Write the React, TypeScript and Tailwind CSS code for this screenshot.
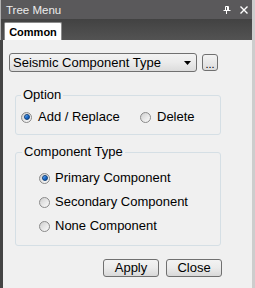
import type { ReactNode } from 'react'

const FONT = { fontFamily: '"Liberation Sans", Arial, sans-serif' }

function Radio({ checked, children, gap = 'gap-[6px]' }: { checked?: boolean; children: ReactNode; gap?: string }) {
  return (
    <label className={`flex h-[14px] items-center ${gap} text-[13px] leading-[14px] text-black`}>
      <span className="flex h-[11px] w-[11px] shrink-0 items-center justify-center rounded-full border border-[#8a8a8a] bg-gradient-to-br from-[#cfcfcf] via-[#e6e6e6] to-[#fbfbfb]">
        {checked && (
          <span className="h-[6px] w-[6px] rounded-full border border-[#0d3f7a] bg-gradient-to-br from-[#7fc0ff] via-[#1f6fd0] to-[#0c4a9a]" />
        )}
      </span>
      <span>{children}</span>
    </label>
  )
}

function Group({ title, titleGap, children, className }: { title: string; titleGap: string; children: ReactNode; className: string }) {
  return (
    <fieldset className={`ml-[12px] w-[206px] rounded-[3px] border border-[#d5dfe5] ${className}`}>
      <legend className={`${titleGap} px-[2px] text-[13px] leading-[14px] text-black`}>{title}</legend>
      {children}
    </fieldset>
  )
}

function Btn({ label }: { label: string }) {
  return (
    <button className="flex h-[18px] w-[56px] items-center justify-center rounded-[3px] border border-[#707070] bg-gradient-to-b from-[#f3f3f3] via-[#ebebeb] to-[#d8d8d8] text-[13px] leading-[14px] text-black">
      {label}
    </button>
  )
}

export default function App() {
  return (
    <div className="flex h-[288px] w-[255px] flex-col overflow-hidden border-r-[3px] border-r-[#cdcdcd] bg-[#f0f0f0]" style={FONT}>
      {/* title bar */}
      <div className="flex h-[19px] shrink-0 items-center border-l border-l-[#b0b0b0] bg-[#5a595b] pl-[5px] pr-[4px]">
        <span className="text-[11.5px] leading-[12px] text-[#ececec]">Tree Menu</span>
        <div className="ml-auto flex items-center gap-[9px]">
          <svg width="8" height="8" viewBox="0 0 8 8" className="shrink-0">
            <path d="M2.5 0.5h3v4h-3z" fill="none" stroke="#fff" strokeWidth="1" />
            <path d="M4.5 0.5v4" stroke="#fff" strokeWidth="1" />
            <path d="M0.5 4.5h7" stroke="#fff" strokeWidth="1" />
            <path d="M3.5 4.5v3.5" stroke="#fff" strokeWidth="1" />
          </svg>
          <svg width="8" height="8" viewBox="0 0 8 8" className="shrink-0">
            <path d="M0.5 0.5l7 7M7.5 0.5l-7 7" stroke="#fff" strokeWidth="1.4" />
          </svg>
        </div>
      </div>

      {/* tab strip */}
      <div className="flex h-[21px] shrink-0 items-end border-l border-l-[#b0b0b0] bg-gradient-to-b from-[#424242] to-[#535353] pl-[3px]">
        <div className="flex h-[18px] w-[58px] items-center justify-center rounded-t-[2px] border border-b-0 border-[#8c8c8c] bg-white text-[11px] font-bold leading-[12px] text-black">
          Common
        </div>
      </div>

      {/* content */}
      <div className="flex flex-1 flex-col border-l-[3px] border-l-[#444444]">
        <div className="ml-[6px] mt-[13px] flex items-start">
          <div className="flex h-[19px] w-[188px] items-center rounded-[3px] border border-[#707070] bg-gradient-to-b from-[#f3f3f3] via-[#ebebeb] to-[#dcdcdc] pl-[3px] pr-[5px] text-[13px] leading-[14px] text-black">
            <span>Seismic Component Type</span>
            <svg width="7" height="4" viewBox="0 0 7 4" className="ml-auto">
              <path d="M0 0h7L3.5 4z" fill="#000" />
            </svg>
          </div>
          <button className="ml-[5px] mt-[1px] flex h-[17px] w-[16px] items-end justify-center rounded-[3px] border border-[#707070] bg-gradient-to-b from-[#f3f3f3] to-[#dcdcdc] pb-[2px] text-[11px] leading-[8px] text-black">
            ...
          </button>
        </div>

        <Group title="Option" titleGap="ml-[5px]" className="mt-[16px]">
          <div className="flex pb-[10px] pl-[5px] pt-[8px]">
            <div className="w-[119px]">
              <Radio checked>Add / Replace</Radio>
            </div>
            <Radio>Delete</Radio>
          </div>
        </Group>

        <Group title="Component Type" titleGap="ml-[6px]" className="mt-[10px]">
          <div className="flex flex-col gap-[10px] pb-[12px] pl-[23px] pt-[12px]">
            <Radio checked gap="gap-[5px]">Primary Component</Radio>
            <Radio gap="gap-[5px]">Secondary Component</Radio>
            <Radio gap="gap-[5px]">None Component</Radio>
          </div>
        </Group>

        <div className="ml-[100px] mt-[13px] flex gap-[7px]">
          <Btn label="Apply" />
          <Btn label="Close" />
        </div>
      </div>
    </div>
  )
}
